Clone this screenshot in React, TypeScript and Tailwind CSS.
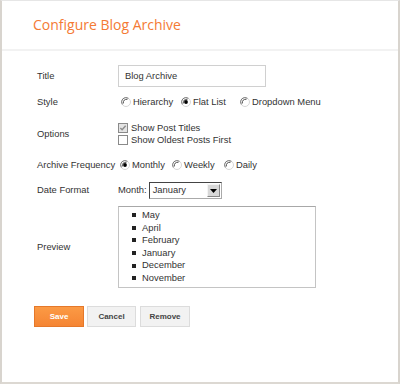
import { type ReactNode } from 'react';

const font = { fontFamily: '"Liberation Sans", Arial, sans-serif' };

function Radio({ checked }: { checked?: boolean }): ReactNode {
  return (
    <svg width="10" height="10" viewBox="0 0 10 10" className="shrink-0">
      <circle cx="5" cy="5" r="4.5" fill="#fff" stroke="#d6d6d6" strokeWidth="1" />
      <path d="M1.3 7.4 A4.4 4.4 0 0 1 7.4 1.3" fill="none" stroke="#7a7a7a" strokeWidth="1" />
      <path d="M2.4 6.4 A3.2 3.2 0 0 1 6.4 2.4" fill="none" stroke="#3a3a3a" strokeWidth="0.9" />
      {checked ? <circle cx="5" cy="5" r="1.9" fill="#000" /> : null}
    </svg>
  );
}

function Checkbox({ checked }: { checked?: boolean }): ReactNode {
  return (
    <span
      className={`flex h-[10px] w-[10px] shrink-0 items-center justify-center border border-[#8a8a8a] ${
        checked ? 'bg-[#e4e4e4]' : 'bg-white'
      }`}
    >
      {checked ? (
        <svg width="8" height="8" viewBox="0 0 9 9">
          <path d="M1.5 4.5 L3.5 6.5 L7.5 2" fill="none" stroke="#8c8c8c" strokeWidth="1.6" />
        </svg>
      ) : null}
    </span>
  );
}

function Row({ label, className, children }: { label: string; className: string; children: ReactNode }): ReactNode {
  return (
    <div className={`flex items-center ${className}`}>
      <div className="w-[81px] shrink-0">{label}</div>
      {children}
    </div>
  );
}

const months = ['May', 'April', 'February', 'January', 'December', 'November'];

export default function App(): ReactNode {
  return (
    <div className="h-[385px] w-[400px] bg-white">
      <div className="flex h-[384px] flex-col border-x-2 border-b-2 border-t border-x-[#d8d4ce] border-b-[#dcd8d2] border-t-[#e6e6e6] bg-white">
        <div className="flex h-[50px] items-center border-b-2 border-[#f2f2f2] pl-[31px]">
          <h1 className="pb-[1px] text-[14px] text-[#f47a34]" style={{ fontFamily: '"Open Sans", sans-serif' }}>
            Configure Blog Archive
          </h1>
        </div>
        <div className="pl-[35px] text-[9.4px] text-[#333]" style={font}>
          <Row label="Title" className="mt-[14px] h-[22px]">
            <div className="flex h-[22px] w-[148px] items-center border border-[#d0d0d0] pl-[6px] text-[#333]">
              Blog Archive
            </div>
          </Row>
          <Row label="Style" className="mt-[6px] h-[18px]">
            <div className="flex items-center pl-[3px]">
              <Radio />
              <span className="ml-[2px] w-[48px]">Hierarchy</span>
              <Radio checked />
              <span className="ml-[2px] w-[47px]">Flat List</span>
              <Radio />
              <span className="ml-[2px]">Dropdown Menu</span>
            </div>
          </Row>
          <Row label="Options" className="mt-[10px] h-[26px]">
            <div className="flex flex-col">
              <div className="flex h-[12px] items-center">
                <Checkbox checked />
                <span className="ml-[3px]">Show Post Titles</span>
              </div>
              <div className="flex h-[12px] items-center">
                <Checkbox />
                <span className="ml-[3px]">Show Oldest Posts First</span>
              </div>
            </div>
          </Row>
          <Row label="Archive Frequency" className="mt-[9px] h-[18px]">
            <div className="flex items-center pl-[2px]">
              <Radio checked />
              <span className="ml-[2px] w-[40px]">Monthly</span>
              <Radio />
              <span className="ml-[2px] w-[40px]">Weekly</span>
              <Radio />
              <span className="ml-[2px]">Daily</span>
            </div>
          </Row>
          <Row label="Date Format" className="mt-[7px] h-[19px]">
            <div className="flex items-center">
              <span className="mr-[2px]">Month:</span>
              <div className="flex h-[17px] w-[73px] items-center justify-between border border-[#444] border-b-[#aaa] border-r-[#aaa] pl-[3px] pr-[1px]">
                <span>January</span>
                <span className="flex h-[13px] w-[13px] items-center justify-center border border-[#888] border-l-[#f4f4f4] border-t-[#f4f4f4] bg-[#d8d8d8]">
                  <svg width="7" height="4" viewBox="0 0 7 4">
                    <path d="M0 0 H7 L3.5 4 Z" fill="#000" />
                  </svg>
                </span>
              </div>
            </div>
          </Row>
          <Row label="Preview" className="mt-[6px] h-[82px]">
            <div className="h-[82px] w-[198px] border border-[#c4c4c4] border-t-[#a8a8a8] pl-[13px] pt-[2px]">
              <ul className="leading-[12.6px]">
                {months.map((m) => (
                  <li key={m} className="flex items-center">
                    <span className="mr-[6px] h-[4px] w-[4px] bg-[#222]" />
                    {m}
                  </li>
                ))}
              </ul>
            </div>
          </Row>
          <div className="-ml-[3px] mt-[18px] flex gap-[3px] text-[8px] font-bold">
            <button className="h-[21px] w-[50px] border border-[#e5782a] bg-gradient-to-b from-[#fb9a45] to-[#f58533] text-white">
              Save
            </button>
            <button className="h-[21px] w-[49px] border border-[#dcdcdc] bg-[#f2f2f2] text-[#444]">
              Cancel
            </button>
            <button className="ml-[1px] h-[21px] w-[50px] border border-[#dcdcdc] bg-[#f2f2f2] text-[#444]">
              Remove
            </button>
          </div>
        </div>
      </div>
    </div>
  );
}
